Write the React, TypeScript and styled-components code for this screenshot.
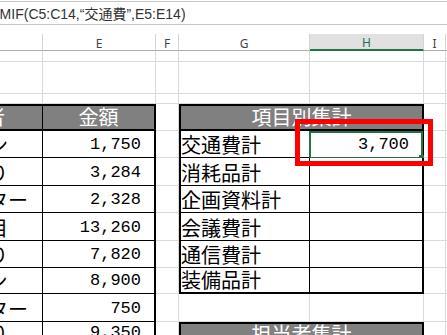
import styled, { createGlobalStyle } from "styled-components"

const GlobalStyle = createGlobalStyle`
  html, body {
    margin: 0;
    padding: 0;
    background: #fff;
  }
  body {
    width: 447px;
    height: 335px;
    overflow: hidden;
  }
`

// visible part of the sheet: columns D..J, rows from the column header down
const COLS = [137, 113, 23, 131, 114, 22, 40]
const LETTERS = ["D", "E", "F", "G", "H", "I", "J"]
const ROWS = [17, 11, 32, 10, 27, 27, 28, 27, 28, 27, 26, 28, 24]

const GRID = "#dadada"
const EXCEL_GREEN = "#217346"

const Screen = styled.div`
  width: 447px;
  height: 335px;
  overflow: hidden;
`

const FormulaBar = styled.div`
  margin-top: 1px;
  height: 22px;
  border-top: 1px solid #c6c6c6;
  border-bottom: 1px solid #c6c6c6;
  display: flex;
  align-items: center;
  overflow: hidden;
  white-space: nowrap;
  font-family: "Liberation Sans", "Noto Sans CJK JP", sans-serif;
  font-size: 14px;
  color: #333;

  span {
    margin-left: -28px;
  }
`

const Sheet = styled.div`
  margin-top: 9px;
  margin-left: -94px;
  display: grid;
  grid-template-columns: ${COLS.map((c) => c + "px").join(" ")};
  grid-template-rows: ${ROWS.map((r) => r + "px").join(" ")};
`

const GridCell = styled.div<{ $c: number; $r: number }>`
  grid-column: ${(p) => p.$c};
  grid-row: ${(p) => p.$r};
  box-sizing: border-box;
  border-right: 1px solid ${GRID};
  border-bottom: 1px solid ${GRID};
`

const ColHead = styled.div<{ $c: number; $active?: boolean }>`
  grid-column: ${(p) => p.$c};
  grid-row: 1;
  box-sizing: border-box;
  display: flex;
  align-items: center;
  justify-content: center;
  padding-top: 2px;
  font-family: "Noto Sans", sans-serif;
  font-size: 12px;
  color: ${(p) => (p.$active ? EXCEL_GREEN : "#444")};
  background: ${(p) => (p.$active ? "#e1e1e1" : "#fff")};
  border-right: 1px solid #d4d4d4;
  border-bottom: ${(p) => (p.$active ? `2px solid ${EXCEL_GREEN}` : "1px solid #ababab")};
`

type CellProps = {
  $c: string | number
  $r: string | number
  $bt?: number
  $bl?: number
  $br?: number
  $bb?: number
  $head?: boolean
  $num?: boolean
  $align?: "left" | "center" | "right"
}

const TCell = styled.div<CellProps>`
  grid-column: ${(p) => p.$c};
  grid-row: ${(p) => p.$r};
  position: relative;
  box-sizing: border-box;
  display: flex;
  align-items: flex-end;
  justify-content: ${(p) =>
    p.$align === "right" ? "flex-end" : p.$align === "center" ? "center" : "flex-start"};
  padding: 0 ${(p) => (p.$num ? 13 : 0)}px 2px 0;
  border-style: solid;
  border-color: #000;
  border-width: ${(p) => `${p.$bt ?? 0}px ${p.$br ?? 1}px ${p.$bb ?? 1}px ${p.$bl ?? 0}px`};
  background: ${(p) => (p.$head ? "#808080" : "#fff")};
  color: ${(p) => (p.$head ? "#fff" : "#000")};
  font-family: ${(p) => (p.$num ? `"Liberation Mono", monospace` : `"Noto Sans CJK JP", sans-serif`)};
  font-size: ${(p) => (p.$num ? 17 : 20)}px;
  line-height: 20px;
  white-space: nowrap;
`

const Selection = styled.div`
  position: absolute;
  left: -1px;
  top: 0;
  right: -1px;
  bottom: -2px;
  border: 2px solid ${EXCEL_GREEN};
  pointer-events: none;

  &::after {
    content: "";
    position: absolute;
    right: -3px;
    bottom: -3px;
    width: 5px;
    height: 5px;
    background: ${EXCEL_GREEN};
  }
`

const Highlight = styled.div`
  position: absolute;
  left: -15px;
  top: -12px;
  width: 138px;
  height: 47px;
  box-sizing: border-box;
  border: 5px solid #ff0000;
  z-index: 2;
`

const people = [
  ["林　ジョン", "1,750"],
  ["森　ひかり", "3,284"],
  ["林　ピーター", "2,328"],
  ["佐藤　夏目", "13,260"],
  ["森　みどり", "7,820"],
  ["佐藤　ケン", "8,900"],
  ["林　ピーター", "750"],
  ["森　ひかり", "9,350"],
]

const items = ["交通費計", "消耗品計", "企画資料計", "会議費計", "通信費計", "装備品計"]

export default function App() {
  const gridCells = []
  for (let r = 2; r <= ROWS.length; r++) {
    for (let c = 1; c <= COLS.length; c++) {
      gridCells.push(<GridCell key={`${r}-${c}`} $c={c} $r={r} />)
    }
  }

  return (
    <Screen>
      <GlobalStyle />
      <FormulaBar>
        <span>=SUMIF(C5:C14,“交通費”,E5:E14)</span>
      </FormulaBar>
      <Sheet>
        {gridCells}
        {LETTERS.map((l, i) => (
          <ColHead key={l} $c={i + 1} $active={l === "H"}>
            {l}
          </ColHead>
        ))}

        {/* 担当者 / 金額 */}
        <TCell $c={1} $r={5} $bt={2} $bl={2} $bb={2} $head $align="center">
          担当者
        </TCell>
        <TCell $c={2} $r={5} $bt={2} $br={2} $bb={2} $head $align="center">
          金額
        </TCell>
        {people.map(([name, amount], i) => [
          <TCell key={`n${i}`} $c={1} $r={6 + i} $bl={2}>
            {name}
          </TCell>,
          <TCell key={`a${i}`} $c={2} $r={6 + i} $br={2} $num $align="right">
            {amount}
          </TCell>,
        ])}

        {/* 項目別集計 */}
        <TCell $c="4 / 6" $r={5} $bt={2} $bl={2} $br={2} $bb={2} $head $align="center">
          項目別集計
        </TCell>
        {items.map((item, i) => {
          const last = i === items.length - 1
          return [
            <TCell key={`i${i}`} $c={4} $r={6 + i} $bl={2} $bb={last ? 2 : 1}>
              {item}
            </TCell>,
            <TCell key={`v${i}`} $c={5} $r={6 + i} $br={2} $bb={last ? 2 : 1} $num $align="right">
              {i === 0 && "3,700"}
              {i === 0 && <Selection />}
              {i === 0 && <Highlight />}
            </TCell>,
          ]
        })}

        <TCell $c="4 / 6" $r={13} $bt={2} $bl={2} $br={2} $bb={0} $head $align="center">
          担当者集計
        </TCell>
      </Sheet>
    </Screen>
  )
}
